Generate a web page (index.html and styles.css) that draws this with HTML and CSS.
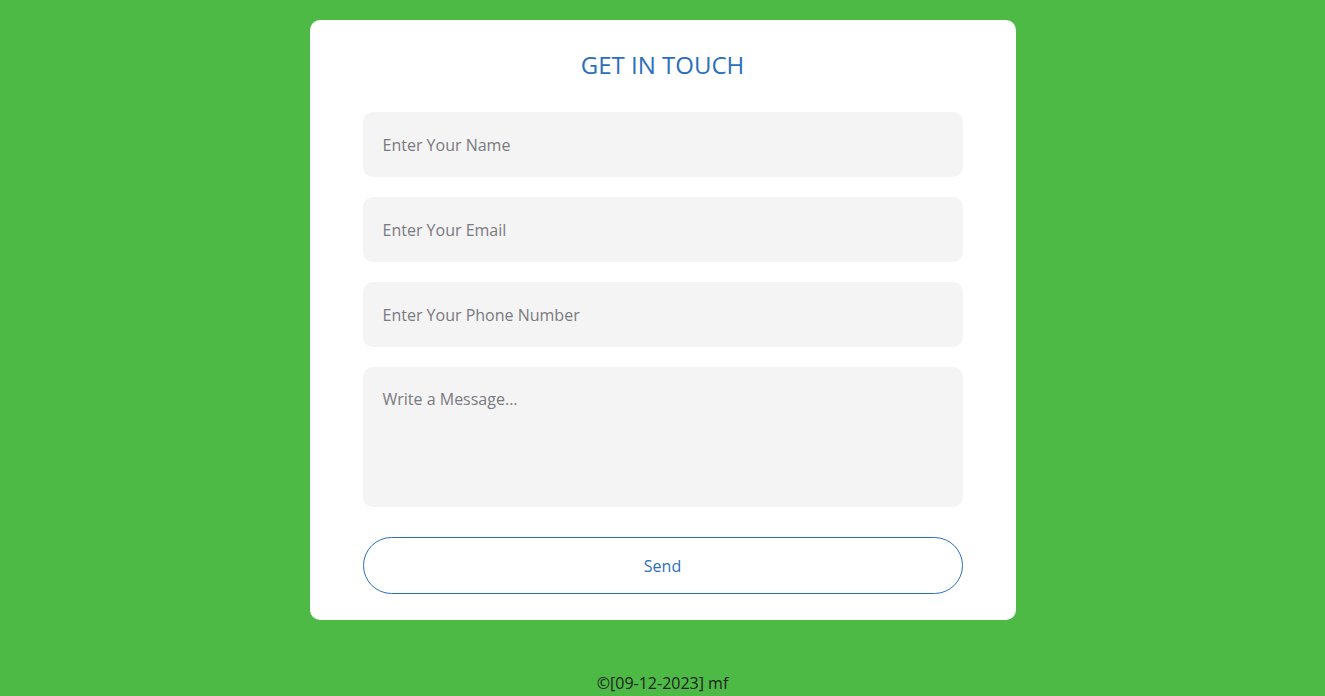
FILE: index.html
```html
<!DOCTYPE html>
<html lang="en">
<head>
<meta charset="utf-8">
<title>Get in touch</title>
<link rel="stylesheet" href="styles.css">
</head>
<body>
<main class="page">
  <form class="card">
    <h1 class="title">GET IN TOUCH</h1>
    <input class="field" type="text" placeholder="Enter Your Name">
    <input class="field" type="email" placeholder="Enter Your Email">
    <input class="field" type="tel" placeholder="Enter Your Phone Number">
    <textarea class="field message" placeholder="Write a Message..."></textarea>
    <button class="send" type="button">Send</button>
  </form>
  <footer class="footer">©[09-12-2023] mf</footer>
</main>
</body>
</html>
```

FILE: styles.css
```css
* { box-sizing: border-box; }
html, body { margin: 0; padding: 0; }
body {
  background: #4cba45;
  font-family: "Open Sans", "Liberation Sans", sans-serif;
  height: 696px;
  overflow: hidden;
}
.page {
  display: flex;
  flex-direction: column;
  align-items: center;
  padding-top: 20px;
}
.card {
  width: 706px;
  height: 600px;
  background: #fff;
  border-radius: 10px;
  padding: 27px 53px 26px;
  display: flex;
  flex-direction: column;
}
.card > * { flex-shrink: 0; }
.title {
  margin: 0 0 29px;
  text-align: center;
  font-size: 24px;
  line-height: 36px;
  font-weight: 400;
  color: #2b6fbd;
}
.field {
  display: block;
  width: 100%;
  height: 65px;
  border: none;
  border-radius: 10px;
  background: #f4f4f4;
  padding: 0 20px;
  margin: 0 0 20px;
  font-family: inherit;
  font-size: 16px;
  color: #333;
  outline: none;
}
.field::placeholder { color: #7a7a80; }
.message {
  height: 140px;
  padding: 20px;
  resize: none;
  margin-bottom: 30px;
  line-height: 24px;
}
.send {
  height: 57px;
  width: 100%;
  border: 1px solid #2b6fbd;
  border-radius: 30px;
  background: #fff;
  color: #2b6fbd;
  font-family: inherit;
  font-size: 16px;
  font-weight: 500;
}
.footer {
  margin-top: 51px;
  font-size: 16px;
  line-height: 24px;
  color: #222;
}
```
